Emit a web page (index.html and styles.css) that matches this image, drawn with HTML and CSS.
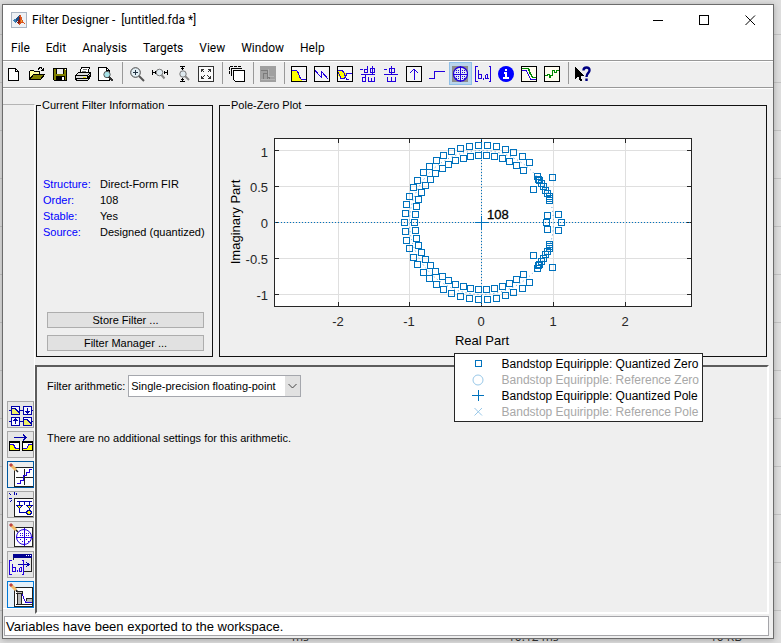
FILE: index.html
```html
<!DOCTYPE html>
<html lang="en">
<head>
<meta charset="utf-8">
<title>Filter Designer</title>
<link rel="stylesheet" href="styles.css">
</head>
<body>
<div class="backdrop"><span>ms</span><span>10.12 ms</span><span>10 KB</span></div>
<div class="window">
  <header class="titlebar">
    <svg class="app-icon" viewBox="0 0 16 16"><rect x=".5" y=".5" width="15" height="15" fill="#eef1f5" stroke="#a9b4c2"/><path d="M1.500 8.500 5 6.500 7 8.500 4.500 11z" fill="#3d7fb5"/><path d="M5 6.500 9 2.500 8 8 4.500 11z" fill="#1f4f86"/><path d="M9 2.500C10.500 4 11.500 9 14 12L11 10.500 8 13.500 6.500 10.500C8 8 8 5 9 2.500z" fill="#d9541e"/><path d="M9 3C9.500 6 9 10 8 13.500L6.500 10.500C8 8 8.500 6 9 3z" fill="#8b1d12"/><path d="M9.500 4.500 11 9 10 10z" fill="#f6a531"/></svg>
    <h1>Filter Designer -&nbsp; [untitled.fda *]</h1>
    <button aria-label="Minimize"><svg viewBox="0 0 11 11"><path d="M0 5.500H10"/></svg></button>
    <button aria-label="Maximize"><svg viewBox="0 0 11 11"><path d="M.5.5H9.500V9.500H.5z"/></svg></button>
    <button aria-label="Close"><svg class="smooth" viewBox="0 0 11 11"><path d="M.5.5 10 10M10 .5.5 10"/></svg></button>
  </header>
  <nav class="menubar">
    <button>File</button><button>Edit</button><button>Analysis</button><button>Targets</button><button>View</button><button>Window</button><button>Help</button>
  </nav>
  <div class="toolbar" role="toolbar">
    <button aria-label="New"><svg viewBox="0 0 16 16"><path d="M2.500 2.500H9.500L12.500 5.500V14.500H2.500z" fill="#fff" stroke="#000"/><path d="M9.500 2V5.500H13" fill="none" stroke="#000"/></svg></button>
    <button aria-label="Open"><svg viewBox="0 0 16 16"><path d="M.5 13.500V5.500L1.500 4.500H4.500L5.500 5.500H10.500V8.500" fill="#ffff9c" stroke="#000"/><path d="M.5 13.500 4.500 8.500H15.500L11.500 13.500z" fill="#808000" stroke="#000"/><path d="M9 3.500V2.500H10L11 1.500H12L14.500 4.500M12 4.500H14.500V2" fill="none" stroke="#000"/></svg></button>
    <button aria-label="Save"><svg viewBox="0 0 16 16"><path d="M1.500 2.500H14.500V14.500H2.500L1.500 13.500z" fill="#808000" stroke="#000"/><path d="M4 2H12V8H4z" fill="#000"/><path d="M5 3H11V7.500H5z" fill="#eee"/><path d="M4 10H13V15H4z" fill="#000"/><path d="M10 11H12V14H10zM13 3H14V4H13z" fill="#fff"/></svg></button>
    <button aria-label="Print"><svg viewBox="0 0 16 16"><path d="M4.500 7.500 6.500 1.500H14.500L12.500 7.500" fill="#fff" stroke="#000"/><path d="M7.500 3.500H12M6.500 5.500H11" stroke="#777"/><path d="M.5 9.500 3.500 6.500H15.500V10.500L12.500 14.500H1.500L.5 12.500z" fill="#ddd" stroke="#000"/><path d="M1 9.500H12.500L15 7M1 12.500H12.500V9.500M12.500 12.500 15 9.500" fill="none" stroke="#000"/><path d="M8 11H11V12H8z" fill="#e8d800"/></svg></button>
    <button aria-label="Print preview"><svg viewBox="0 0 16 16"><path d="M.5 1.500H8.500L11.500 4.500V14.500H.5z" fill="#fff" stroke="#000"/><path d="M8.500 1.500V4.500H11.500" fill="none" stroke="#000"/><circle class="smooth" cx="9" cy="8.500" r="3.200" fill="#a8e2e8" stroke="#555"/><path d="M11 11 15 15" stroke="#333" stroke-width="2"/></svg></button>
    <span class="sep"></span>
    <button aria-label="Zoom in"><svg class="smooth" viewBox="0 0 16 16"><circle cx="6.500" cy="6.500" r="4.800" fill="#e3eff5" stroke="#444"/><path d="M10 10 15 15" stroke="#555" stroke-width="2"/><path d="M4 6.500H9M6.500 4V9" stroke="#234"/></svg></button>
    <button aria-label="Zoom X"><svg viewBox="0 0 16 16"><g class="smooth"><circle cx="7.500" cy="6.500" r="3.300" fill="#dfeaf0" stroke="#777"/><path d="M9.500 9 12.500 12.500" stroke="#888" stroke-width="2"/></g><path d="M.5 4V9M1 6.500H4M3 5V8M15.500 4V9M12 6.500H15M12.500 5V8" stroke="#000" fill="none"/></svg></button>
    <button aria-label="Zoom Y"><svg viewBox="0 0 16 16"><g class="smooth"><circle cx="8" cy="8" r="3.200" fill="#dfeaf0" stroke="#777"/><path d="M10 10 14 14" stroke="#888" stroke-width="2"/></g><path d="M5 .5H10M7.500 1V4M6 2.500H9M5 15.500H10M7.500 12V15M6 13.500H9" stroke="#000" fill="none"/></svg></button>
    <button aria-label="Full view"><svg viewBox="0 0 16 16"><path d="M.5.5H15.500V15.500H.5z" fill="#fafafa" stroke="#333"/><path d="M3.500 6V3.500H6M3.500 3.500 6.500 6.500M10 3.500H12.500V6M12.500 3.500 9.500 6.500M3.500 10V12.500H6M3.500 12.500 6.500 9.500M10 12.500H12.500V10M12.500 12.500 9.500 9.500" fill="none" stroke="#333"/></svg></button>
    <span class="sep"></span>
    <button aria-label="Full view analysis"><svg viewBox="0 0 16 16"><path d="M.5 8V.5H13M.5 .5H11V3" fill="none" stroke="#000" stroke-dasharray="3 1"/><path d="M2.500 10V2.500H13" fill="none" stroke="#000"/><path d="M4.500 4.500H15.500V15.500H6.500L4.500 13.500z" fill="#fff" stroke="#000"/></svg></button>
    <span class="sep"></span>
    <button aria-label="Filter specifications" disabled><svg viewBox="0 0 16 16"><path d="M0 0H16V16H0z" fill="#a0a0a0"/><path d="M1 4.500H7.500V9L10 13H15M3.500 7V14M3 7.500H7V14" fill="none" stroke="#7b7b7b"/><path d="M1 13.500H15M8.500 3V10H14" fill="none" stroke="#b4b4b4"/></svg></button>
    <span class="sep"></span>
    <button aria-label="Magnitude response"><svg viewBox="0 0 16 16"><path d="M.5.5H15.500V15.500H.5z" fill="#f6f6f6" stroke="#000"/><path d="M1 5H6L7 7 9 13 11 15H1z" fill="#ff0"/><path d="M1 4.500H5.500L7.500 7 8.500 11 10.500 13.500H15" fill="none" stroke="#20d"/></svg></button>
    <button aria-label="Phase response"><svg viewBox="0 0 16 16"><path d="M.5.5H15.500V15.500H.5z" fill="#f6f6f6" stroke="#000"/><path d="M1 4.500 7.500 11.500V5.500L14.500 13.500" fill="none" stroke="#20d"/></svg></button>
    <button aria-label="Magnitude and phase"><svg viewBox="0 0 16 16"><path d="M.5.5H15.500V15.500H.5z" fill="#f6f6f6" stroke="#000"/><path d="M1 5H6L9 8 7 13H4L1 9z" fill="#ff0"/><path d="M1 4.500H5.500L7.500 8 9.500 13.500H12M1 6 4 12.500H7.500L10 7.500H15" fill="none" stroke="#20d"/></svg></button>
    <button aria-label="Group delay"><svg viewBox="0 0 16 16"><path d="M0 3.500H3M7.500 0V7M4.500 3.500H7.500M4.500 3V6.500H7.500M12.500 0V8M10.500 2.500H14.500V6.500H10.500zM1 8.500H15M5.500 9V16M2.500 11.500H5.500M2.500 11V15.500H5.500M8.500 11V15.500H14.500V11M11.500 12V15" fill="none" stroke="#20d"/></svg></button>
    <button aria-label="Phase delay"><svg viewBox="0 0 16 16"><path d="M1 3.500H4M8.500 0V8M6.500 2.500H11.500V6.500H6.500zM1 8.500H15M4.500 11V15.500H12.500V11M8.500 11V15" fill="none" stroke="#20d"/></svg></button>
    <button aria-label="Impulse response"><svg viewBox="0 0 16 16"><path d="M.5.5H15.500V15.500H.5z" fill="#f6f6f6" stroke="#000"/><path d="M8 3V14M4 7 8 3 12 7" fill="none" stroke="#20d"/></svg></button>
    <button aria-label="Step response"><svg viewBox="0 0 16 16"><path d="M0 12.500H5.500V5.500H16" fill="none" stroke="#20d"/></svg></button>
    <button class="active" aria-label="Pole-zero plot" aria-pressed="true"><svg viewBox="0 0 16 16"><path d="M0 0H16V16H0z" fill="#8c8c8c"/><circle class="smooth" cx="8.500" cy="8" r="7" fill="#e6ecf4" stroke="#20d" stroke-width="1.300"/><path d="M8.500 0V16M1 8.500H16" stroke="#20d"/><path d="M4 4h1v1h-1zM6 6h1v1h-1zM6 4h1v1h-1zM4 6h1v1h-1zM10 4h1v1h-1zM12 6h1v1h-1zM12 4h1v1h-1zM10 6h1v1h-1zM4 10h1v1h-1zM6 12h1v1h-1zM6 10h1v1h-1zM4 12h1v1h-1zM10 10h1v1h-1zM12 12h1v1h-1zM12 10h1v1h-1zM10 12h1v1h-1z" fill="#20d"/></svg></button>
    <button aria-label="Filter coefficients"><svg viewBox="0 0 16 16"><path d="M2.500 .5H.5V15.500H2.500M13.500 .5H15.500V15.500H13.500M3.500 4V12.500H6.500V8.500H3.500M8.500 12V14M10.500 8.500H12.500V12.500H10.500V9M12.500 12.500H14" fill="none" stroke="#20d"/></svg></button>
    <button aria-label="Filter information"><svg class="smooth" viewBox="0 0 16 16"><circle cx="8" cy="8" r="8" fill="#00f"/><path d="M7 3H9V5H7zM6 6H9V11H11V13H5V11H7V8H6z" fill="#fff"/></svg></button>
    <button aria-label="Magnitude response estimate"><svg viewBox="0 0 16 16"><path d="M.5.5H15.500V15.500H.5z" fill="#fffdf0" stroke="#000"/><path d="M1 4.500H5L10 13.500H15" fill="none" stroke="#20d"/><path d="M1 2.500H7.500L8.500 6 11.500 11.500H15" fill="none" stroke="#080" stroke-width="1.500"/></svg></button>
    <button aria-label="Round-off noise"><svg viewBox="0 0 16 16"><path d="M.5.5H15.500V15.500H.5z" fill="#fffdf0" stroke="#000"/><path d="M1 9.500H3.500V8.500H5V11.500H6.500V9.500H8.500V4.500H10.500V6.500H12.500V4.500H15" fill="none" stroke="#080"/></svg></button>
    <span class="sep"></span>
    <button aria-label="What's this"><svg viewBox="0 0 16 16"><path d="M0 1V13L3 10 5 15H7L6 10H9z" fill="#000"/><path class="smooth" d="M8.500 4.500C8.500 .5 15 .5 14.500 4.500 14.500 7 11.500 7 11.500 11M11.500 12.500V15" fill="none" stroke="#000080" stroke-width="2.400"/></svg></button>
  </div>

  <div class="workspace">
    <aside class="sidebar">
      <button aria-label="Create a multirate filter"><svg viewBox="0 0 25 25"><path d="M3.500 4.500H11.500V12.500H3.500zM15.500 4.500H23.500V12.500H15.500zM3.500 15.500H11.500V23.500H3.500zM15.500 15.500H23.500V23.500H15.500z" fill="#f8f8ff" stroke="#00a"/><path d="M4 7H7L11 11V12H4zM16 18H19L23 22V23H16z" fill="#ee6"/><path d="M1 8.500H4M12 8.500H15M23 8.500H25M1 19.500H4M12 19.500H15M23 19.500H25M19.500 6V11M17.500 9 19.500 11 21.500 9M7.500 22V17M5.500 19 7.500 17 9.500 19M4 6.500H7L11 10.500M16 17.500H19L23 21.500" fill="none" stroke="#00a"/></svg></button>
      <button aria-label="Transform filter"><svg viewBox="0 0 25 25"><path d="M6 5.500H18M15 3 18 5.500 15 8" fill="none" stroke="#00a" stroke-width="1.500"/><path d="M1.500 9.500H11.500V18.500H1.500zM14.500 9.500H24.500V18.500H14.500z" fill="#fff" stroke="#000"/><path d="M2 12H5L8 17H11V18H2zM24 12H21L18 17H15V18H24z" fill="#ff0"/><path d="M1.500 9.500H11.500M14.500 9.500H25" stroke="#000" stroke-width="2"/><path d="M2 12.500H5.500L7.500 16.500H11M24 12.500H21L18.500 16.500H15" fill="none" stroke="#20d"/></svg></button>
      <button class="outlined" aria-label="Set quantization parameters"><svg viewBox="0 0 25 25"><path d="M6.500 5.500H25V24.500H6.500z" fill="#fff" stroke="#222"/><path d="M16.500 7V23M8 15.500H25" stroke="#222"/><path d="M9 21.500H12.500V18.500H15.500V13.500H18.500V10.500H21.500V7.500H24" fill="none" stroke="#20d"/><g class="smooth"><path d="M3 3 8 8" stroke="#f4bb68" stroke-width="3"/><path d="M2 2 4 4" stroke="#b44" stroke-width="3"/><path d="M8 8 10 10" stroke="#222" stroke-width="1.500"/></g></svg></button>
      <button aria-label="Realize model"><svg viewBox="0 0 25 25"><path d="M6.500 6.500H25V24.500H6.500z" fill="#fff" stroke="#222"/><path d="M9 9.500H24M11.500 9V20.500H19M21.500 9V20.500M16.500 9V13" fill="none" stroke="#00a"/><path d="M8.500 13.500H14.500L11.500 16.500zM18.500 13.500H24.500L21.500 16.500z" fill="#ff0" stroke="#00a"/><circle cx="21" cy="20.500" r="2.200" fill="#ff0" stroke="#00a"/><path d="M1 1 3 3M6 0V3M9 1 8 3M1 6H4M2 10 4 8" stroke="#00a"/></svg></button>
      <button aria-label="Pole-zero editor"><svg viewBox="0 0 25 25"><path d="M6.500 5.500H24.500V24.500H6.500z" fill="#fff" stroke="#222"/><circle class="smooth" cx="16" cy="15" r="7.500" fill="none" stroke="#20d"/><path d="M16.500 6V24M8 15.500H25" stroke="#20d"/><path d="M12 11h1v1h-1zM14 13h1v1h-1zM12 13h1v1h-1zM14 11h1v1h-1zM18 11h1v1h-1zM20 13h1v1h-1zM18 13h1v1h-1zM20 11h1v1h-1zM12 17h1v1h-1zM14 19h1v1h-1zM18 17h1v1h-1zM20 19h1v1h-1z" fill="#20d"/><g class="smooth"><path d="M3 3 8 8" stroke="#f4bb68" stroke-width="3"/><path d="M2 2 4 4" stroke="#b44" stroke-width="3"/><path d="M8 8 10 10" stroke="#222" stroke-width="1.500"/></g></svg></button>
      <button aria-label="Import filter"><svg viewBox="0 0 25 25"><path d="M5.500 2.500H23.500V19.500H5.500z" fill="#e8e8e8" stroke="#222"/><path d="M5 2H24V6H5z" fill="#000090"/><path d="M18 3H19V4H18zM20 3H21V4H20zM22 3H23V4H22z" fill="#fff"/><path d="M1 8H16V22H1z" fill="#eee"/><path d="M10 12.500H21M18 10 21 12.500 18 15" fill="none" stroke="#00a"/><path d="M3.500 8.500H1.500V22.500H3.500M13.500 8.500H15.500V22.500H13.500M4.500 12V19.500H7.500V15.500H4.500M9.500 18V20M11.500 15.500H13.500V19.500H11.500V16" fill="none" stroke="#20d"/></svg></button>
      <button class="selected" aria-label="Design filter"><svg viewBox="0 0 25 25"><path d="M6.500 5.500H24.500V24.500H6.500z" fill="#fff" stroke="#222"/><path d="M9 9H14V22H9zM18 17H24V20H18z" fill="#bbb"/><path d="M8 9.500H14.500V12M8 11.500H14M9.500 12V22M13.500 12V22M18.500 19V16.500H24M8 22.500H24" fill="none" stroke="#222"/><path d="M14.500 12 15.500 15.500 17.500 20.500H24" fill="none" stroke="#20d"/><g class="smooth"><path d="M3 3 8 8" stroke="#f4bb68" stroke-width="3"/><path d="M2 2 4 4" stroke="#b44" stroke-width="3"/><path d="M8 8 10 10" stroke="#222" stroke-width="1.500"/></g></svg></button>
    </aside>
    <main class="content">
      <div class="panels">
        <fieldset class="info">
          <legend>Current Filter Information</legend>
          <dl>
            <dt>Structure:</dt><dd>Direct-Form FIR</dd>
            <dt>Order:</dt><dd>108</dd>
            <dt>Stable:</dt><dd>Yes</dd>
            <dt>Source:</dt><dd>Designed (quantized)</dd>
          </dl>
          <div class="info-actions">
            <button>Store Filter ...</button>
            <button>Filter Manager ...</button>
          </div>
        </fieldset>
        <div class="plot">
          <fieldset>
            <legend>Pole-Zero Plot</legend>
            <svg class="chart" viewBox="220 113 546 243" role="img" aria-label="Pole-zero plot">
              <defs>
                <marker id="zero" markerUnits="userSpaceOnUse" markerWidth="9" markerHeight="9" refX="4.500" refY="4.500" overflow="visible"><rect x="1.500" y="1.500" width="6" height="6" fill="none" stroke="#0072bd"/></marker>
              </defs>
              <rect x="274.500" y="138.500" width="417" height="168" fill="#fff"/>
              <path class="grid" d="M338.500 139V306M409.500 139V306M481.500 139V306M553.500 139V306M625.500 139V306M275 150.500H691M275 186.500H691M275 222.500H691M275 258.500H691M275 294.500H691"/>
              <path class="axis" d="M274.500 138.500H691.500V306.500H274.500zM338.500 139v4M409.500 139v4M481.500 139v4M553.500 139v4M625.500 139v4M338.500 306v-4M409.500 306v-4M481.500 306v-4M553.500 306v-4M625.500 306v-4M275 150.500h4M275 186.500h4M275 222.500h4M275 258.500h4M275 294.500h4M691 150.500h-4M691 186.500h-4M691 222.500h-4M691 258.500h-4M691 294.500h-4"/>
              <path class="guide" d="M275 222.500H691M481.500 139V306"/>
              <circle class="unit" cx="481.500" cy="222.500" r="72"/>
              <path class="pole" d="M475 222.500H488M481.500 216V229"/>
              <g transform="translate(481.500 222.500)">
                <g id="zeros">
                  <polyline class="zeros" points="-77,0 -76,-9 -75,-18 -72,-26 -68,-35 -64,-42 -58,-50 -52,-56 -45,-62 -38,-67 -30,-71 -21,-74 -12,-76 -3,-77 6,-77 15,-76 24,-73 32,-70 41,-66 48,-60"/>
                  <polyline class="zeros" points="-67,0 -66,-8 -65,-16 -63,-23 -60,-30 -56,-37 -51,-43 -46,-49 -39,-54 -33,-58 -26,-62 -18,-64 -11,-66 -3,-67 5,-67 13,-66 21,-64 28,-61 35,-57 42,-52"/>
                  <polyline class="zeros" points="56,-46 57,-43 58,-42 60,-39 62,-36 64,-32 66,-29 68,-26 68,-24 68,-22"/>
                  <polyline class="zeros" points="71,-45 52,-33 66,-7 77,-8 65,0 80,0"/>
                </g>
                <use href="#zeros" transform="scale(1 -1)"/>
              </g>
              <text class="count" x="487" y="219">108</text>
              <g class="ticks" text-anchor="middle"><text x="338" y="326">-2</text><text x="409" y="326">-1</text><text x="481" y="326">0</text><text x="553" y="326">1</text><text x="625" y="326">2</text></g>
              <g class="ticks" text-anchor="end"><text x="268" y="157">1</text><text x="268" y="192">0.5</text><text x="268" y="228">0</text><text x="268" y="264">-0.5</text><text x="268" y="300">-1</text></g>
              <text class="title" x="482" y="345" text-anchor="middle">Real Part</text>
              <text class="title" transform="translate(240 222) rotate(-90)" text-anchor="middle">Imaginary Part</text>
            </svg>
          </fieldset>
          <ul class="legend">
            <li><svg viewBox="0 0 14 14"><path d="M4.500 3.500H10.500V9.500H4.500z"/></svg>Bandstop Equiripple: Quantized Zero</li>
            <li class="dim"><svg class="smooth" viewBox="0 0 14 14"><circle cx="7" cy="7" r="5"/></svg>Bandstop Equiripple: Reference Zero</li>
            <li><svg viewBox="0 0 14 14"><path d="M1 6.500H13M7.500 1V12"/></svg>Bandstop Equiripple: Quantized Pole</li>
            <li class="dim"><svg class="smooth" viewBox="0 0 14 14"><path d="M3.500 3 11 10.500M11 3 3.500 10.500"/></svg>Bandstop Equiripple: Reference Pole</li>
          </ul>
        </div>
      </div>
      <section class="settings">
        <div class="field">
          <label for="arith">Filter arithmetic:</label>
          <span class="select"><select id="arith"><option>Single-precision floating-point</option></select><svg class="smooth" viewBox="0 0 15 20"><path d="M0 0H15V20H0z" fill="#e1e1e1"/><path d="M3.500 8 7.500 12 11.500 8" fill="none" stroke="#444"/></svg></span>
        </div>
        <p>There are no additional settings for this arithmetic.</p>
      </section>
    </main>
  </div>
  <footer class="status">Variables have been exported to the workspace.</footer>
</div>
</body>
</html>
```
FILE: styles.css
```css
* { box-sizing: border-box; }

body {
  margin: 0;
  min-height: 100vh;
  display: flex;
  padding: 4px 7px 4px 2px;
  position: relative;
  overflow: hidden;
  color: #000;
  font: 11px/16px "Liberation Sans", Arial, sans-serif;
  background: repeating-linear-gradient(#dedede 0 34px, #c4c4c4 34px 35px, #dedede 35px 48px);
}

button, select { font: inherit; color: inherit; border: 0; padding: 0; margin: 0; border-radius: 0; background: none; }
svg { display: block; shape-rendering: crispEdges; }
.smooth { shape-rendering: auto; }

.backdrop {
  position: absolute;
  left: 292px;
  right: 0;
  bottom: -2px;
  display: grid;
  grid-template-columns: 216px 202px 1fr;
  font: 12px/16px "Open Sans", sans-serif;
  color: #333;
}

.window {
  flex: 1;
  min-width: 0;
  display: flex;
  flex-direction: column;
  position: relative;
  border: 1px solid #6c6c6c;
  background: #efefef;
  box-shadow: 0 1px 6px rgba(0, 0, 0, .25);
}

.titlebar { display: flex; align-items: center; height: 30px; padding-left: 8px; background: #fff; }
.titlebar h1 { flex: 1; margin: 0 0 0 5px; font: 12px/16px Roboto, "Open Sans", sans-serif; }
.app-icon { width: 16px; height: 16px; }
.titlebar button { width: 46px; height: 30px; display: grid; place-items: center; }
.titlebar button svg { width: 11px; height: 11px; fill: none; stroke: #000; }

.menubar { display: flex; gap: 16px; height: 26px; padding: 0 8px; background: #fff; border-bottom: 1px solid #999; }
.menubar button { font: 12px/24px Roboto, "Open Sans", sans-serif; }

.toolbar { display: flex; height: 27px; border-top: 1px solid #fff; border-bottom: 1px solid #999; }
.toolbar button { width: 23px; height: 23px; padding: 3px; border: 0; }
.toolbar button svg { width: 16px; height: 16px; }
.toolbar .active { background: #b9d5ec; box-shadow: inset 0 0 0 1px #90c0e8; }
.sep { width: 8px; height: 22px; background: linear-gradient(#999, #999) 4px 0 / 1px 100% no-repeat; }

.workspace { flex: 1; display: flex; border-top: 1px solid #fff; }

.sidebar {
  width: 32px;
  margin: 15px 0 5px;
  padding: 0 0 0 4px;
  display: flex;
  flex-direction: column;
  justify-content: flex-end;
  gap: 3px;
  border-top: 1px solid #b4b4b4;
  border-bottom: 1px solid #fff;
  border-right: 1px solid #fff;
}
.sidebar button { height: 27px; overflow: hidden; border: 1px solid #a8a8a8; border-right-color: #999; background: #e6e6e6; }
.sidebar button svg { width: 25px; height: 25px; }
.sidebar .outlined { border-color: #0058a0; background: #eee; }
.sidebar .selected { border-color: #0078d7; background: #e5f1fb; }

.content { flex: 1; min-width: 0; display: flex; flex-direction: column; padding: 9px 4px 0 0; }
.panels { display: flex; gap: 6px; padding: 0 2px 0 1px; }
fieldset { margin: 0; padding: 0; min-width: 0; border: 1px solid #111; }
legend { padding: 0 4px 0 1px; line-height: 15px; }

.info { width: 177px; flex: none; }
.info legend { margin-left: 4px; }
.info dl { display: grid; grid-template-columns: 57px 1fr; margin: 63px 0 72px 6px; }
.info dt { color: #00f; }
.info dd { margin: 0; }
.info-actions { display: grid; gap: 7px; margin: 0 8px 0 10px; }
.info-actions button { height: 16px; line-height: 14px; border: 1px solid #adadad; background: #e1e1e1; }

.plot { flex: 1; min-width: 0; position: relative; }
.plot legend { margin-left: 10px; }
.chart { width: 100%; height: auto; }
.grid { stroke: #dfdfdf; }
.axis { fill: none; stroke: #262626; }
.guide { stroke: #0072bd; stroke-dasharray: 1 2; }
.unit { fill: none; stroke: #4f9bd0; stroke-dasharray: 1 3; shape-rendering: auto; }
.pole { stroke: #0072bd; }
.zeros { fill: none; marker: url(#zero); }
.ticks { font-size: 13px; fill: #262626; }
.title, .count { font-size: 13px; }
.count { stroke: #000; stroke-width: 0.3px; }

.legend {
  position: absolute;
  right: 64px;
  bottom: -65px;
  margin: 0;
  padding: 2px 3px 1px 16px;
  list-style: none;
  border: 1px solid #262626;
  background: #fff;
  font-size: 12px;
}
.legend li { display: flex; align-items: center; gap: 17px; white-space: nowrap; }
.legend svg { width: 14px; height: 14px; fill: none; stroke: #0072bd; }
.legend .dim { color: #a8a8a8; }
.legend .dim svg { stroke: #99c8e8; }

.settings { flex: 1; margin-top: 8px; padding: 8px 10px; border: 2px solid #fff; border-top-color: #5c5c5c; border-left-color: #5c5c5c; }
.field { display: flex; align-items: center; gap: 3px; }
.select { position: relative; display: block; }
.select select { appearance: none; width: 173px; height: 22px; padding-left: 2px; border: 1px solid #a5a7ad; background: #fff; }
.select svg { position: absolute; top: 1px; right: 1px; width: 15px; height: 20px; pointer-events: none; }
.settings p { margin: 33px 0 0; }

.status { margin: 2px 4px 2px 1px; height: 20px; padding-left: 1px; border: 1px solid #a5a5a9; background: #fff; font-size: 13px; line-height: 19px; }
```
